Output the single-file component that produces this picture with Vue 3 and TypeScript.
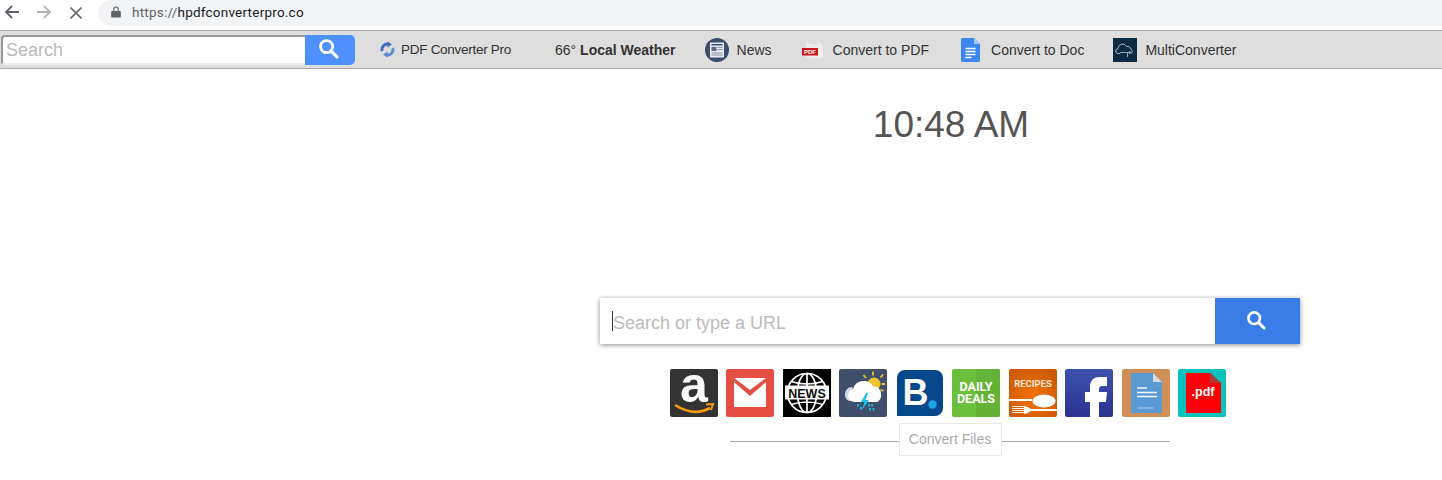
<script setup lang="ts">
const clock = "10:48 AM";
</script>

<template>
  <div class="page">
    <div class="chrome">
      <svg class="nav-icon back" viewBox="0 0 16 16"><path d="M15 8H2M8 2 2 8l6 6" fill="none" stroke="#5f6368" stroke-width="1.800" /></svg>
      <svg class="nav-icon fwd" viewBox="0 0 16 16"><path d="M1 8h13M8 2l6 6-6 6" fill="none" stroke="#b4b6b9" stroke-width="1.800" /></svg>
      <svg class="nav-icon stop" viewBox="0 0 14 14"><path d="M1.500 1.500l11 11M12.500 1.500l-11 11" fill="none" stroke="#5f6368" stroke-width="1.700" /></svg>
      <div class="address">
        <svg class="lock" viewBox="0 0 10 12"><path d="M1 5h8a.8.8 0 0 1 .8.8v5a.8.8 0 0 1-.8.8H1a.8.8 0 0 1-.8-.8v-5A.8.8 0 0 1 1 5z" fill="#5f6368" /><path d="M2.800 5V3.200a2.200 2.200 0 0 1 4.400 0V5" fill="none" stroke="#5f6368" stroke-width="1.200" /></svg>
        <span class="url"><span class="scheme">https://</span>hpdfconverterpro.co</span>
      </div>
    </div>

    <div class="toolbar">
      <div class="bar-search">
        <input class="bar-input" placeholder="Search" />
        <button class="bar-btn">
          <svg viewBox="0 0 20 20" width="21" height="21"><circle cx="8.200" cy="8.200" r="5.800" fill="none" stroke="#fff" stroke-width="2.600" /><path d="M12.600 12.600 18 18" stroke="#fff" stroke-width="3" stroke-linecap="round" /></svg>
        </button>
      </div>
      <div class="tb-item pdfpro">
        <svg width="17" height="17" viewBox="0 0 17 17">
          <path d="M8.500 1.500a7 7 0 0 0-6.600 9.300L4.600 9.600A4 4 0 0 1 8.600 4.500l-.6 2.300L13 3.600 8.800.6z" fill="#3f72bb" />
          <path d="M8.500 15.500a7 7 0 0 0 6.600-9.300l-2.700 1.200a4 4 0 0 1-4 5.100l.6-2.300L4 13.400l4.200 3z" fill="#5b8fd0" />
        </svg>
        <span class="pdfpro-label">PDF Converter Pro</span>
      </div>
      <div class="tb-item weather"><span>66°&nbsp;</span><b>Local Weather</b></div>
      <div class="tb-item news">
        <svg width="24" height="24" viewBox="0 0 24 24">
          <circle cx="12" cy="12" r="12" fill="#3c4d6e" />
          <rect x="5" y="4.500" width="14" height="15" fill="#e8ebf0" />
          <rect x="6.500" y="6" width="11" height="1.500" fill="#3c4d6e" />
          <rect x="6.500" y="9" width="5" height="4" fill="#5a6a85" />
          <path d="M12.500 9.500H17.500M12.500 11.500H17.500M6.500 15H17.500M6.500 17H17.500" stroke="#6a7890" stroke-width=".8" />
        </svg>
        <span>News</span>
      </div>
      <div class="tb-item topdf">
        <svg width="23" height="20" viewBox="0 0 23 20">
          <path d="M5 2l11-1 6 4v13H5z" fill="#efedeb" />
          <path d="M5 3l10-2 3 4z" fill="#dfdcda" />
          <rect x="1" y="8" width="16" height="7.500" fill="#c8161d" />
          <text x="9" y="14" class="pdf-tag">PDF</text>
        </svg>
        <span>Convert to PDF</span>
      </div>
      <div class="tb-item todoc">
        <svg width="20" height="24" viewBox="0 0 20 24">
          <path d="M1.500 0H13l6 6v16.500a1.500 1.500 0 0 1-1.500 1.500h-16A1.500 1.500 0 0 1 0 22.500v-21A1.500 1.500 0 0 1 1.500 0z" fill="#3b86f0" />
          <path d="M13 0l6 6h-6z" fill="#a4c6f8" />
          <path d="M4.500 10.500h10M4.500 13.500h10M4.500 16.500h10M4.500 19.500h6" stroke="#fff" stroke-width="1.400" />
        </svg>
        <span>Convert to Doc</span>
      </div>
      <div class="tb-item multi">
        <svg width="24" height="24" viewBox="0 0 24 24">
          <rect width="24" height="24" fill="#0c2b44" />
          <path d="M7 15.500H5.500a2.500 2.500 0 0 1-.5-5 4.500 4.500 0 0 1 8.500-2 3.500 3.500 0 0 1 4.500 3 2.200 2.200 0 0 1 0 4" fill="none" stroke="#b8c4cd" stroke-width=".9" />
          <path d="M7 14.500h11M16 13l2 1.500-2 1.500M14.500 15v4" fill="none" stroke="#b8c4cd" stroke-width=".8" />
        </svg>
        <span>MultiConverter</span>
      </div>
    </div>

    <main class="home">
      <div class="clock">{{ clock }}</div>

      <div class="search-box">
        <div class="search-field"><span class="caret"></span><span class="hint">Search or type a URL</span></div>
        <button class="search-btn">
          <svg viewBox="0 0 20 20" width="20" height="20"><circle cx="8.200" cy="8.200" r="5.800" fill="none" stroke="#fff" stroke-width="2.600" /><path d="M12.600 12.600 18 18" stroke="#fff" stroke-width="3" stroke-linecap="round" /></svg>
        </button>
      </div>

      <div class="tiles">
        <svg class="tile" viewBox="0 0 48 48">
          <rect width="48" height="48" rx="2" fill="#333" />
          <text x="24" y="33" class="t-amazon">a</text>
          <path d="M5 36q19 12 35 3" fill="none" stroke="#f79a0e" stroke-width="2.600" />
          <path d="M36 35.500l7-.5-2 6" fill="none" stroke="#f79a0e" stroke-width="2" />
        </svg>
        <svg class="tile" viewBox="0 0 48 48">
          <rect width="48" height="48" rx="2" fill="#e54e42" />
          <path d="M8 9h32L24 21z" fill="#fff" />
          <path d="M8 13l16 14 16-14v25H8z" fill="#fff" />
        </svg>
        <svg class="tile" viewBox="0 0 48 48">
          <rect width="48" height="48" fill="#000" />
          <g fill="none" stroke="#fff" stroke-width="1.700">
            <circle cx="24" cy="24" r="19.500" />
            <ellipse cx="24" cy="24" rx="9.500" ry="19.500" />
            <path d="M24 5v38M8 12.500q16 5 32 0M8 35.500q16-5 32 0" />
          </g>
          <rect x="2" y="16.500" width="44" height="14" fill="#fff" />
          <text x="24" y="28.500" class="t-news">NEWS</text>
        </svg>
        <svg class="tile" viewBox="0 0 48 48">
          <rect width="48" height="48" rx="2" fill="#3f4f6c" />
          <circle cx="35" cy="15" r="6.500" fill="#f2c230" />
          <path d="M34 2.500v4M24.500 6l2.500 3M44 5.500l-2.500 3M46 15h-3.500M44.500 22l-3-1.500" stroke="#f2c230" stroke-width="1.800" />
          <path d="M6 26a7 7 0 0 1 7-8l4 8-4 6a6 6 0 0 1-7-6z" fill="#d5dae2" />
          <path d="M16 33a6.500 6.500 0 0 1-2-12.800 11 11 0 0 1 20-3 7.500 7.500 0 0 1 8 7.500 7 7 0 0 1-4 8.300z" fill="#fff" />
          <path d="M27 24l-5 9h3.500l-2.500 8 7-10h-3.500l2.500-7z" fill="#1cc0ee" />
          <path d="M19 35v2.500M22 38v2.500M30 35v2.500M33 35v2.500M31 39v2.500M34.500 39v2.500" stroke="#1cc0ee" stroke-width="1.600" />
        </svg>
        <svg class="tile" viewBox="0 0 48 48">
          <path d="M1 47V9a8 8 0 0 1 8-8h30a8 8 0 0 1 8 8v30a8 8 0 0 1-8 8z" fill="#04478a" />
          <text x="6.500" y="36" class="t-booking">B</text>
          <circle cx="36.500" cy="35.500" r="4.200" fill="#1ba3e6" />
        </svg>
        <svg class="tile" viewBox="0 0 48 48">
          <rect width="48" height="48" rx="2" fill="#6cbf3a" />
          <rect x="24" width="24" height="48" rx="2" fill="#64b338" />
          <text class="t-deals"><tspan x="24" y="22">DAILY</tspan><tspan x="24" y="34">DEALS</tspan></text>
        </svg>
        <svg class="tile" viewBox="0 0 48 48">
          <defs>
            <radialGradient id="rcp" cx="0.500" cy="0.550" r="0.700">
              <stop offset="0" stop-color="#f47206" />
              <stop offset="1" stop-color="#c85606" />
            </radialGradient>
          </defs>
          <rect width="48" height="48" rx="2" fill="url(#rcp)" />
          <text x="24" y="18" class="t-recipes">RECIPES</text>
          <path d="M0 30h23v2H0z" fill="#fff" />
          <ellipse cx="35" cy="32" rx="11.500" ry="6.500" fill="#fff" />
          <path d="M3 37.500h13M3 39.500h13M3 41.500h13M3 43.500h13" stroke="#fff" stroke-width=".9" />
          <path d="M15 37q4 .5 7 3h26v2H22q-3 2.500-7 3z" fill="#fff" />
        </svg>
        <svg class="tile" viewBox="0 0 48 48">
          <defs>
            <linearGradient id="fb" x1="0" y1="0" x2="0" y2="1">
              <stop offset="0" stop-color="#3d52ae" />
              <stop offset="1" stop-color="#2a3390" />
            </linearGradient>
          </defs>
          <rect width="48" height="48" rx="2" fill="url(#fb)" />
          <path d="M25 48V33h-5V23h5v-5c0-7 4-10 10-10h7v9h-4c-3 0-4 1-4 3v3h8l-1 10h-7v15z" fill="#fff" />
        </svg>
        <svg class="tile" viewBox="0 0 48 48">
          <rect width="48" height="48" rx="2" fill="#d18f58" />
          <path d="M9 4h22l9 9v31H9z" fill="#5b9bd5" />
          <path d="M31 4l9 9h-9z" fill="#d5dae6" />
          <path d="M15 19h10M15 23.500h20M15 27.500h20" stroke="#f2f6fb" stroke-width="1.400" />
          <path d="M16 39h16" stroke="#dbe8f5" stroke-width="1.200" stroke-dasharray="1 .6" />
        </svg>
        <svg class="tile" viewBox="0 0 48 48">
          <rect width="48" height="48" rx="2" fill="#08c2bb" />
          <path d="M8 4h24l11 10v30H8z" fill="#fb0007" />
          <path d="M32 4l11 10H32z" fill="#a63a35" />
          <text x="25" y="26.500" class="t-pdf">.pdf</text>
        </svg>
      </div>

      <div class="convert">
        <span class="rule"></span>
        <span class="convert-box">Convert Files</span>
        <span class="rule"></span>
      </div>
    </main>
  </div>
</template>

<style>
html,
body {
  margin: 0;
  background: #fff;
}
</style>

<style scoped>
.page {
  width: 1442px;
  height: 480px;
  overflow: hidden;
  font-family: "Liberation Sans", Arial, sans-serif;
  background: #fff;
}

.chrome {
  display: flex;
  align-items: center;
  height: 26px;
  padding-bottom: 4px;
}

.nav-icon {
  flex: none;
  width: 16px;
  height: 16px;
}

.back {
  margin-left: 4px;
  margin-bottom: 2px;
}

.fwd {
  margin-left: 16px;
  margin-bottom: 2px;
}

.stop {
  width: 14px;
  height: 14px;
  margin-left: 17px;
  margin-bottom: 1px;
}

.address {
  flex: 1;
  display: flex;
  align-items: center;
  height: 26px;
  margin-left: 15px;
  padding-left: 13px;
  background: #f1f3f4;
  border-radius: 13px 0 0 13px;
}

.lock {
  width: 10px;
  height: 12px;
  margin-bottom: 2px;
}

.url {
  margin-left: 11px;
  margin-bottom: 2px;
  font-family: "Roboto", "Liberation Sans", sans-serif;
  font-size: 13.500px;
  color: #202124;
  letter-spacing: 0.22px;
}

.scheme {
  color: #5f6368;
}

.toolbar {
  display: flex;
  align-items: center;
  height: 37px;
  background: #dedede;
  border-top: 1px solid #a9a9a9;
  border-bottom: 1px solid #a9a9a9;
  font-size: 14px;
  color: #333;
}

.bar-search {
  display: flex;
  width: 354px;
  height: 30px;
  margin-left: 1px;
  flex: none;
}

.bar-input {
  box-sizing: border-box;
  width: 304px;
  height: 30px;
  padding: 1px 3px 0 3px;
  border-style: solid;
  border-width: 2px 0 2px 2px;
  border-color: #979797 transparent #eee #979797;
  border-radius: 4px 0 0 4px;
  background: #fff;
  font: 18px "Liberation Sans", Arial, sans-serif;
  outline: none;
}

.bar-input::placeholder {
  color: #b9b9b9;
}

.bar-btn {
  display: flex;
  align-items: center;
  justify-content: center;
  width: 50px;
  height: 30px;
  padding: 0 3px 2px 0;
  border: 0;
  border-radius: 0 5px 5px 0;
  background: #4d90fe;
}

.tb-item {
  display: flex;
  align-items: center;
  flex: none;
  white-space: nowrap;
}

.pdfpro {
  margin-left: 24px;
  gap: 5px;
}

.pdfpro-label {
  font-size: 13.500px;
  letter-spacing: -0.28px;
}

.weather {
  margin-left: 44px;
}

.news {
  margin-left: 29px;
  gap: 8px;
}

.topdf {
  margin-left: 29px;
  gap: 9px;
}

.todoc {
  margin-left: 32px;
  gap: 10px;
}

.multi {
  margin-left: 29px;
  gap: 8px;
}

.pdf-tag {
  font-size: 6px;
  font-weight: 700;
  fill: #fff;
  text-anchor: middle;
}

.home {
  display: flex;
  flex-direction: column;
  align-items: center;
  width: 700px;
  margin-left: 600px;
}

.clock {
  margin-top: 34px;
  margin-left: 2px;
  font-size: 37px;
  line-height: 44px;
  color: #555;
}

.search-box {
  display: flex;
  width: 700px;
  height: 46px;
  margin-top: 151px;
  background: #fff;
  box-shadow: 0 1px 5px rgba(0, 0, 0, 0.45);
}

.search-field {
  flex: 1;
  display: flex;
  align-items: center;
  padding-left: 12px;
  font-size: 18px;
  color: #bbb;
}

.caret {
  width: 1px;
  height: 20px;
  background: #333;
}

.hint {
  margin-top: 4px;
}

.search-btn {
  display: flex;
  align-items: center;
  justify-content: center;
  width: 85px;
  padding: 0 4px 3px 0;
  border: 0;
  background: #3b7de6;
}

.tiles {
  display: flex;
  gap: 8.440px;
  margin-top: 25px;
  margin-right: 4px;
}

.tile {
  display: block;
  width: 48px;
  height: 48px;
  flex: none;
  overflow: visible;
}

.t-amazon {
  font: 700 50px "Liberation Sans", sans-serif;
  fill: #fff;
  text-anchor: middle;
}

.t-news {
  font: 700 12.500px "Liberation Sans", sans-serif;
  fill: #111;
  text-anchor: middle;
}

.t-booking {
  font: 700 36px "Liberation Sans", sans-serif;
  fill: #fff;
}

.t-deals {
  font: 700 12.500px "Roboto", sans-serif;
  fill: #fff;
  text-anchor: middle;
}

.t-recipes {
  font: 700 9.500px "Roboto", sans-serif;
  fill: #fbe6d5;
  text-anchor: middle;
}

.t-pdf {
  font: 700 12.500px "Liberation Sans", sans-serif;
  fill: #fff;
  text-anchor: middle;
}

.convert {
  display: flex;
  align-items: center;
  width: 440px;
  margin-top: 6px;
}

.rule {
  flex: 1;
  height: 1px;
  margin-top: 3px;
  background: #aaa;
}

.convert-box {
  box-sizing: border-box;
  width: 103px;
  height: 33px;
  line-height: 31px;
  text-align: center;
  border: 1px solid #ece6e8;
  font-size: 14px;
  color: #a9a9a9;
}
</style>
